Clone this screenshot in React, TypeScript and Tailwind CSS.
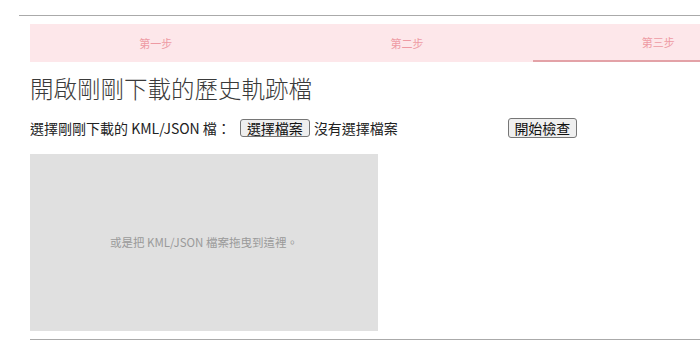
const cjk = "font-['Segoe_UI','Noto_Sans_CJK_TC','Noto_Sans',sans-serif]";

const steps = ["第一步", "第二步", "第三步"];

function NativeButton({ label, className = "" }: { label: string; className?: string }) {
  return (
    <button
      type="button"
      className={`shrink-0 whitespace-nowrap flex items-center justify-center px-[5px] border border-[#767676] rounded-[3px] bg-[#efefef] text-[14px] leading-none text-[#111] ${className}`}
    >
      {label}
    </button>
  );
}

export default function App() {
  return (
    <div className={`w-[700px] h-[350px] overflow-hidden bg-white text-[#333] ${cjk}`}>
      {/* top rule */}
      <div className="pt-[15px] pl-[19px]">
        <div className="h-px bg-[#aaaaaa]" />
      </div>

      <div className="pl-[30px]">
        {/* step tabs */}
        <div className="mt-[8px] flex w-[754px] h-[38px] bg-[#fde7ea]">
          {steps.map((s, i) => (
            <div
              key={s}
              className={`flex-1 flex items-center justify-center text-[11px] text-[#ee9aa3] ${
                i === 2 ? "border-b-2 border-[#e3a2a7] text-[#e3848e]" : ""
              }`}
            >
              {s}
            </div>
          ))}
        </div>

        <h1 className="mt-[12px] text-[23.5px] leading-[28px] font-light text-[#3a3a3a]">開啟剛剛下載的歷史軌跡檔</h1>

        <div className="mt-[16px] flex items-center h-[20px] text-[14px] text-[#222] whitespace-nowrap">
          <span>選擇剛剛下載的 KML/JSON 檔：</span>
          <NativeButton label="選擇檔案" className="ml-[9px] h-[18px] w-[70px]" />
          <span className="ml-[4px] w-[194px] shrink-0">沒有選擇檔案</span>
          <NativeButton label="開始檢查" className="h-[20px] w-[69px]" />
        </div>

        {/* drop zone */}
        <div className="mt-[16px] w-[348px] h-[177px] bg-[#e0e0e0] flex items-center justify-center text-[11.5px] text-[#9a9a9a]">
          或是把 KML/JSON 檔案拖曳到這裡。
        </div>

        <div className="mt-[8px] h-px bg-[#aaaaaa]" />
      </div>
    </div>
  );
}
